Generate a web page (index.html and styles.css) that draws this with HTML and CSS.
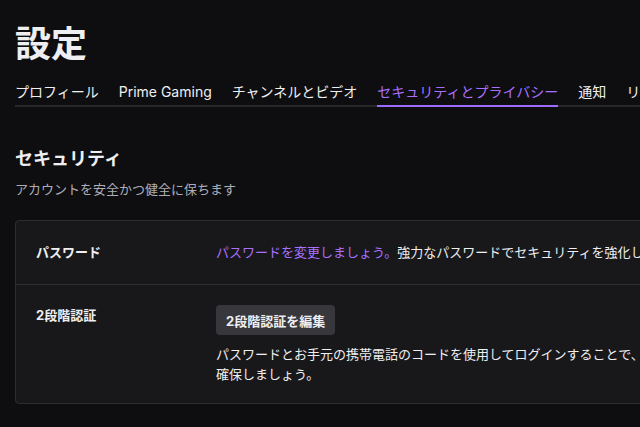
FILE: index.html
```html
<!DOCTYPE html>
<html lang="ja">
<head>
<meta charset="utf-8">
<title>設定</title>
<link rel="stylesheet" href="styles.css">
</head>
<body>
<main class="page">
  <h1 class="title">設定</h1>
  <nav class="tabs">
    <a class="tab">プロフィール</a>
    <a class="tab">Prime Gaming</a>
    <a class="tab">チャンネルとビデオ</a>
    <a class="tab active">セキュリティとプライバシー</a>
    <a class="tab">通知</a>
    <a class="tab">リンク済みのアカウント</a>
  </nav>
  <section class="section">
    <h2 class="section-title">セキュリティ</h2>
    <p class="section-sub">アカウントを安全かつ健全に保ちます</p>
    <div class="card">
      <div class="row row-first">
        <div class="label">パスワード</div>
        <div class="value"><a class="link">パスワードを変更しましょう。</a>強力なパスワードでセキュリティを強化しましょう。</div>
      </div>
      <div class="row">
        <div class="label">2段階認証</div>
        <div class="value">
          <button class="btn">2段階認証を編集</button>
          <p class="desc">パスワードとお手元の携帯電話のコードを使用してログインすることで、アカウントのセキュリティをさらに確保しましょう。</p>
        </div>
      </div>
    </div>
  </section>
</main>
</body>
</html>
```
FILE: styles.css
```css
html, body {
  margin: 0;
  padding: 0;
  overflow: hidden;
  background: #0e0e10;
}
body {
  font-family: Inter, "Noto Sans CJK JP", sans-serif;
  color: #efeff1;
  width: 640px;
  height: 427px;
}
.page {
  padding: 22px 0 0 15px;
  width: 1100px;
}
.title {
  margin: 0;
  font-size: 36px;
  line-height: 44px;
  font-weight: 700;
}
.tabs {
  margin-top: 16px;
  display: flex;
  gap: 20px;
  border-bottom: 2px solid #26262b;
  white-space: nowrap;
}
.tab {
  font-size: 14px;
  line-height: 20px;
  padding-bottom: 3px;
  border-bottom: 2px solid transparent;
  margin-bottom: -2px;
  color: #efeff1;
}
.tab.active {
  color: #a970ff;
  border-bottom-color: #9d6bff;
}
.section-title {
  margin: 40px 0 0;
  font-size: 18px;
  line-height: 24px;
  font-weight: 700;
}
.section-sub {
  margin: 9px 0 0;
  font-size: 13px;
  line-height: 18px;
  color: #adadb8;
}
.card {
  margin-top: 22px;
  background: #18181b;
  border: 1px solid #2c2c31;
  border-radius: 4px;
  width: 1000px;
}
.row {
  display: flex;
  padding: 20px 20px 19px;
  font-size: 13px;
  line-height: 20px;
}
.row-first {
  padding: 21px 20px 22px;
  border-bottom: 1px solid #2c2c31;
}
.label {
  width: 180px;
  flex: none;
  font-weight: 700;
}
.value {
  width: 640px;
}
.link {
  color: #a970ff;
}
.btn {
  font-family: inherit;
  font-size: 13px;
  font-weight: 700;
  color: #efeff1;
  background: #37373c;
  border: none;
  border-radius: 4px;
  height: 30px;
  padding: 0 10px;
  display: block;
}
.desc {
  margin: 9px 0 0;
}
```
